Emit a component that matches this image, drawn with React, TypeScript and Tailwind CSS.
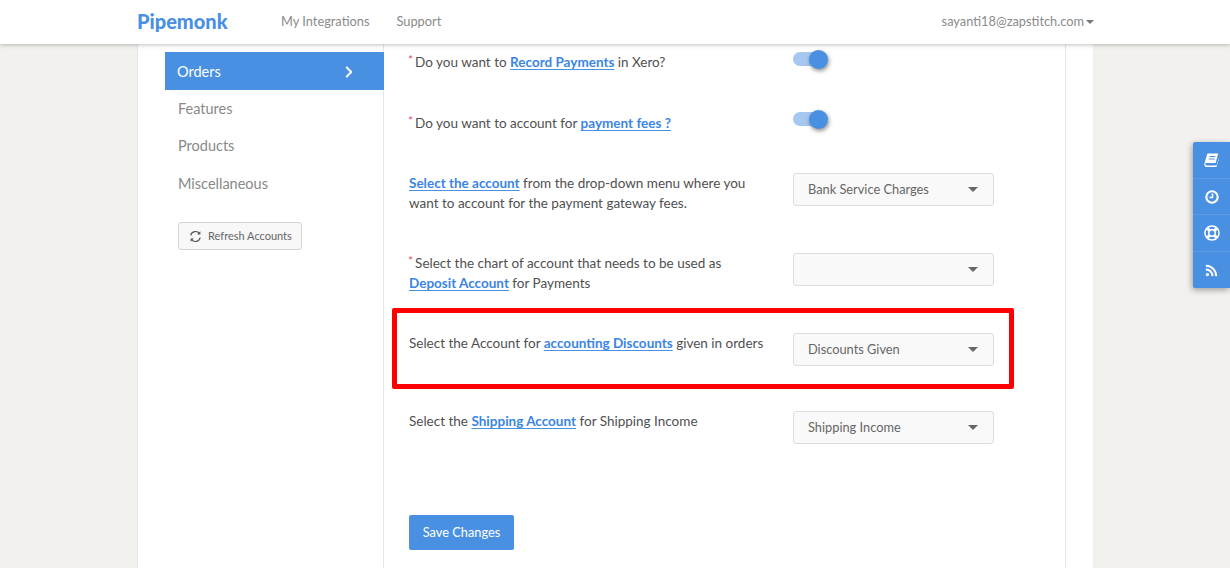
import React from 'react';
import { ChevronRight } from 'lucide-react';
import { FaRegLifeRing, FaRss } from 'react-icons/fa';

const Star = () => <sup className="text-[#e0506e] text-[12px] -ml-[1px] mr-[2px] top-[-3px] leading-none">*</sup>;

const A = ({ children }: { children: React.ReactNode }) => (
  <a className="text-[#3a85e4] font-bold underline underline-offset-2 decoration-[#4a90e2]">{children}</a>
);

const Toggle = () => (
  <div className="relative w-[34px] h-[14px] rounded-full bg-[#a5c7f0]">
    <div className="absolute -right-[1px] -top-[2.5px] w-[19px] h-[19px] rounded-full bg-[#4a90e2] shadow-[1px_2px_4px_rgba(0,0,0,0.45)]" />
  </div>
);

const Select = ({ value }: { value: string }) => (
  <div className="flex items-center justify-between w-[201px] h-[33px] pl-[14px] pr-[15px] bg-[#f9f9f9] border border-[#dddddd] rounded-[3px] text-[12.8px] text-[#666666]">
    <span>{value}</span>
    <span className="w-0 h-0 border-x-[5px] border-x-transparent border-t-[5px] border-t-[#666666]" />
  </div>
);

const Row = ({ h, children, right }: { h: string; children: React.ReactNode; right: React.ReactNode }) => (
  <div className={`flex ${h}`}>
    <div className="w-[384px] pr-[28px] text-[13.5px] leading-[20px] text-[#4f4f4f]">{children}</div>
    <div>{right}</div>
  </div>
);

const App = () => {
  return (
    <div className="relative h-[568px] overflow-hidden bg-[#f2f1ed] font-['Lato',sans-serif]">
      <header className="relative z-10 flex items-center h-[44px] pb-[1px] pl-[137px] pr-[136px] bg-white shadow-[0_1px_4px_rgba(0,0,0,0.25)]">
        <span className="w-[144px] mb-[2px] text-[20px] font-black text-[#4a90e2]">Pipemonk</span>
        <span className="text-[12.8px] text-[#8a8a8a] mr-[27px]">My Integrations</span>
        <span className="text-[12.8px] text-[#8a8a8a]">Support</span>
        <span className="ml-auto text-[12.8px] text-[#8a8a8a]">sayanti18@zapstitch.com</span>
        <span className="ml-[2px] w-0 h-0 border-x-[4px] border-x-transparent border-t-[4px] border-t-[#777777]" />
      </header>

      <div className="flex w-[956px] h-[524px] ml-[137px] pl-[27px] pr-[27px] bg-white border-l border-[#e6e6e6]">
        <aside className="w-[219px] pt-[8px] border-r border-[#e6e6e6]">
          <div className="flex items-center justify-between w-[219px] h-[38px] pt-[1px] pl-[12px] pr-[26px] bg-[#4a90e2] text-[14.5px] text-white">
            Orders
            <ChevronRight size={18} strokeWidth={2.5} />
          </div>
          <div className="flex flex-col pl-[13px] text-[14.5px] text-[#888888]">
            <span className="h-[37px] flex items-center">Features</span>
            <span className="h-[38px] flex items-center">Products</span>
            <span className="h-[37px] flex items-center pt-[1px]">Miscellaneous</span>
          </div>
          <button className="flex items-center gap-[6px] ml-[13px] mt-[20px] w-[124px] h-[28px] pl-[10px] bg-[#f8f8f8] border border-[#d5d5d5] rounded-[3px] text-[11px] text-[#666666]">
            <svg width="13" height="13" viewBox="0 0 16 16" fill="none" stroke="#555555" strokeWidth="1.5">
              <path d="M2.2 6.5A6 6 0 0 1 13 4.5" />
              <path d="M13.8 9.5A6 6 0 0 1 3 11.5" />
              <path d="M14 1.5v4h-4z" fill="#555555" stroke="none" />
              <path d="M2 14.5v-4h4z" fill="#555555" stroke="none" />
            </svg>
            Refresh Accounts
          </button>
        </aside>

        <main className="w-[683px] pt-[8px] pl-[25px] border-r border-[#e6e6e6]">
          <Row h="h-[60px]" right={<Toggle />}>
            <Star />Do you want to <A>Record Payments</A> in Xero?
          </Row>
          <Row h="h-[61px]" right={<Toggle />}>
            <div className="pt-[1px]">
              <Star />Do you want to account for <A>payment fees ?</A>
            </div>
          </Row>
          <Row h="h-[80px]" right={<Select value="Bank Service Charges" />}>
            <A>Select the account</A> from the drop-down menu where you want to account for the payment gateway fees.
          </Row>
          <Row h="h-[80px]" right={<Select value="" />}>
            <Star />Select the chart of account that needs to be used as <A>Deposit Account</A> for Payments
          </Row>
          <Row h="h-[78px]" right={<Select value="Discounts Given" />}>
            Select the Account for <A>accounting Discounts</A> given in orders
          </Row>
          <Row h="h-[104px]" right={<Select value="Shipping Income" />}>
            Select the <A>Shipping Account</A> for Shipping Income
          </Row>
          <button className="w-[105px] h-[35px] bg-[#4a90e2] rounded-[2px] text-[12.8px] text-white">Save Changes</button>
        </main>
      </div>

      {/* annotation */}
      <div className="absolute left-[392px] top-[308px] w-[622px] h-[81px] border-[5px] border-[#ff0000] rounded-[2px]" />

      {/* floating help panel */}
      <div className="absolute right-0 top-[142px] w-[37px] h-[146px] flex flex-col bg-[#4a90e2] rounded-l-[2px] text-white shadow-[-1px_2px_6px_rgba(0,0,0,0.35)]">
        <div className="h-[37px] flex items-center justify-center border-b border-[#5d9be5]">
          <svg width="15" height="14" viewBox="0 0 15 14" fill="none">
            <path d="M4 .5h10.2l-2.6 9.6H1.6C1 11.6 1.6 12.5 3 12.5h9.6l2-7.5v1.5l-1.8 6.8c-.1.4-.4.7-.8.7H2.6C1 14 0 12.6.4 10.8L3 1.6C3.2 1 3.5.5 4 .5z" fill="white" />
            <path d="M5.5 3.5h6M4.8 6h6" stroke="#4a90e2" strokeWidth="1" />
          </svg>
        </div>
        <div className="h-[36px] flex items-center justify-center border-b border-[#5d9be5]">
          <svg width="14" height="14" viewBox="0 0 14 14" fill="none" stroke="white">
            <circle cx="7" cy="7" r="5.7" strokeWidth="2" />
            <path d="M7.5 3.5v4H4.5" strokeWidth="1.5" />
          </svg>
        </div>
        <div className="h-[37px] flex items-center justify-center border-b border-[#5d9be5]">
          <FaRegLifeRing size={16} />
        </div>
        <div className="h-[36px] flex items-center justify-center">
          <FaRss size={13} />
        </div>
      </div>
    </div>
  );
};

export default App;
